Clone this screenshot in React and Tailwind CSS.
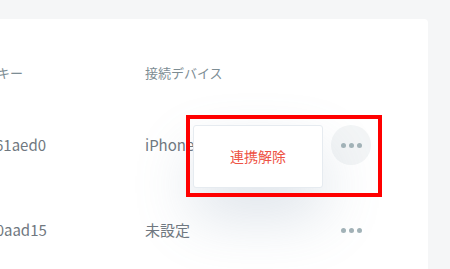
import React from 'react'

const rows = [
  { key: 'c561aed0', device: 'iPhone', open: true },
  { key: 'e70aad15', device: '未設定', open: false },
]

function Dots() {
  return (
    <span className="flex items-center gap-[3px]">
      <span className="size-[5px] rounded-full bg-[#a3b3b8]" />
      <span className="size-[5px] rounded-full bg-[#a3b3b8]" />
      <span className="size-[5px] rounded-full bg-[#a3b3b8]" />
    </span>
  )
}

export default function App() {
  return (
    <div
      className="h-[269px] w-[450px] overflow-hidden bg-[#f5f6f7] pt-[19px] pr-[22px]"
      style={{ fontFamily: '"Noto Sans CJK JP", "Noto Sans", sans-serif' }}
    >
      <div className="relative h-[260px] rounded-tr-[4px] bg-white">
        {/* header */}
        <div className="flex pt-[45px] text-[13px] leading-[18px] text-[#7d8d94]">
          <div className="w-[145px] overflow-hidden">
            <span className="-ml-[29px] block whitespace-nowrap">認証キー</span>
          </div>
          <div>接続デバイス</div>
        </div>

        {/* rows */}
        {rows.map((row, i) => (
          <div
            key={row.key}
            className={`flex h-10 items-center text-[15px] text-[#707880] ${i === 0 ? 'mt-[43px]' : 'mt-[45px]'}`}
          >
            <div className="w-[145px] overflow-hidden">
              <span className="-ml-[21px] block whitespace-nowrap">{row.key}</span>
            </div>
            <div className="w-[186px]">{row.device}</div>
            <div className="relative">
              <button
                type="button"
                className={`flex size-10 items-center justify-center rounded-full ${row.open ? 'bg-[#f3f5f6]' : ''}`}
              >
                <Dots />
              </button>
              {row.open && (
                <>
                  <div className="absolute top-0 right-[48px] z-10 flex h-[63px] w-[130px] items-center justify-center rounded-[3px] border border-[#e6ebf0] bg-white text-[14px] text-[#ee5244] shadow-[0_28px_60px_rgba(110,135,165,0.24)]">
                    連携解除
                  </div>
                  <div className="pointer-events-none absolute top-[-10px] left-[-145px] z-20 h-[82px] w-[196px] border-4 border-[#ff0000]" />
                </>
              )}
            </div>
          </div>
        ))}
      </div>
    </div>
  )
}
